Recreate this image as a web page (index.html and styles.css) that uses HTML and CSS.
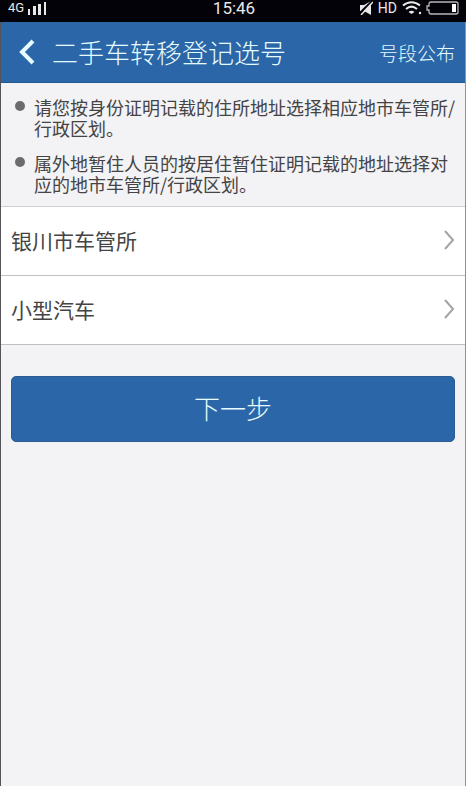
FILE: index.html
```html
<!DOCTYPE html>
<html lang="zh-CN">
<head>
    <meta charset="UTF-8">
    <meta name="viewport" content="width=device-width, initial-scale=1.0">
    <title>二手车转移登记选号</title>
    <link rel="stylesheet" href="styles.css">
</head>
<body>
    <div class="status-bar">
        <div class="status-group">
            <span class="network">4G</span>
            <svg class="signal" width="20" height="13" viewBox="0 0 20 13" fill="#e8e8e8" aria-hidden="true">
                <rect x="0" y="7" width="2" height="6"/>
                <rect x="5" y="4" width="3" height="9"/>
                <rect x="10" y="2" width="3" height="11"/>
                <rect x="16" y="0" width="2" height="13"/>
            </svg>
        </div>
        <span class="clock">15:46</span>
        <div class="status-group status-right">
            <svg width="13" height="14" viewBox="0 0 13 14" aria-hidden="true">
                <path d="M0 4h4l7-4v14L4 10H0z" fill="#e8e8e8"/>
                <path d="M-1 13L12 0" stroke="#020208" stroke-width="2"/>
                <path d="M1 14L13 1" stroke="#e8e8e8" stroke-width="1.500"/>
            </svg>
            <span class="hd">HD</span>
            <svg width="20" height="14" viewBox="0 0 20 14" fill="none" stroke="#e8e8e8" stroke-width="2" aria-hidden="true">
                <path d="M1 4.500C6 0 13 0 18 4.500"/>
                <path d="M4 8c3.500-3 7.500-3 11 0"/>
                <path d="M6.500 11c2-1.700 4-1.700 6 0L9.500 13z" fill="#e8e8e8" stroke="none"/>
                <circle cx="18" cy="12" r="1.200" fill="#e8e8e8" stroke="none"/>
            </svg>
            <svg width="34" height="14" viewBox="0 0 34 14" aria-hidden="true">
                <path d="M5 1h25a2 2 0 0 1 2 2v8a2 2 0 0 1-2 2H5a2 2 0 0 1-2-2V9H1V5h2V3a2 2 0 0 1 2-2z" fill="none" stroke="#b8b8b8" stroke-width="1.300"/>
                <rect x="26" y="3" width="4" height="8" fill="#fff"/>
            </svg>
        </div>
    </div>

    <div class="screen">
        <header class="header">
            <button class="back" type="button" aria-label="返回">
                <svg width="16" height="26" viewBox="0 0 16 26" fill="none" stroke="#e6fbff" stroke-width="4" aria-hidden="true">
                    <path d="M14 2L3 13l11 11"/>
                </svg>
            </button>
            <h1>二手车转移登记选号</h1>
            <a class="header-link" href="#">号段公布</a>
        </header>

        <main>
            <ul class="notice">
                <li>请您按身份证明记载的住所地址选择相应地市车管所/行政区划。</li>
                <li>属外地暂住人员的按居住暂住证明记载的地址选择对应的地市车管所/行政区划。</li>
            </ul>

            <div class="options">
                <button class="option" type="button">
                    <span>银川市车管所</span>
                    <svg width="12" height="20" viewBox="0 0 12 20" fill="none" stroke="#a3a3a3" stroke-width="2" aria-hidden="true">
                        <path d="M2 1l8 9-8 9"/>
                    </svg>
                </button>
                <button class="option" type="button">
                    <span>小型汽车</span>
                    <svg width="12" height="20" viewBox="0 0 12 20" fill="none" stroke="#a3a3a3" stroke-width="2" aria-hidden="true">
                        <path d="M2 1l8 9-8 9"/>
                    </svg>
                </button>
            </div>

            <button class="next" type="button">下一步</button>
        </main>
    </div>
</body>
</html>
```
FILE: styles.css
```css
* {
    box-sizing: border-box;
}

body {
    margin: 0;
    min-height: 100vh;
    display: flex;
    flex-direction: column;
    font-family: "Noto Sans CJK SC", sans-serif;
    font-weight: 400;
    color: #444;
    background: #f3f2f4;
}

button {
    font: inherit;
    color: inherit;
    border: 0;
    cursor: pointer;
}

svg {
    display: block;
    flex-shrink: 0;
}

/* status bar */
.status-bar {
    display: grid;
    grid-template-columns: 1fr auto 1fr;
    align-items: center;
    height: 22px;
    padding: 0 6px 6px 8px;
    background: #020208;
    color: #e8e8e8;
    font-family: Roboto, sans-serif;
    line-height: 16px;
}

.status-group {
    display: flex;
    align-items: center;
    gap: 4px;
}

.status-right {
    justify-content: flex-end;
}

.network {
    font-size: 13px;
}

.clock {
    font-size: 17px;
}

.hd {
    padding: 0 1px;
    font-size: 14px;
}

.screen {
    flex: 1;
    border-left: 1px solid #55535a;
    border-right: 1px solid #929296;
}

.header {
    display: flex;
    align-items: center;
    height: 61px;
    padding: 0 10px 0 18px;
    background: #2a66a8;
    border-bottom: 1px solid #23578f;
    color: #e6fbff;
}

.back {
    padding: 0;
    background: none;
}

h1 {
    flex: 1;
    margin: 0 0 0 17px;
    font-size: 26px;
    font-weight: 300;
    line-height: 36px;
}

.header-link {
    color: inherit;
    font-size: 19px;
    font-weight: 300;
    text-decoration: none;
}

.notice {
    margin: 0;
    padding: 14px 8px 11px 33px;
    list-style: none;
    font-size: 18px;
    line-height: 21px;
}

.notice li {
    position: relative;
}

.notice li + li {
    margin-top: 14px;
}

.notice li::before {
    content: '';
    position: absolute;
    top: 4px;
    left: -19px;
    width: 10px;
    height: 10px;
    border-radius: 50%;
    background: #6b6a6c;
}

.options {
    border-top: 1px solid #cfcdd0;
}

.option {
    display: flex;
    justify-content: space-between;
    align-items: center;
    width: 100%;
    height: 69px;
    padding: 0 10px 2px;
    background: #fff;
    border-bottom: 1px solid #c0bfc1;
    font-size: 21px;
}

.next {
    display: block;
    width: calc(100% - 20px);
    height: 66px;
    margin: 31px 10px;
    padding: 0 0 4px;
    border: 1px solid #2b5c92;
    border-radius: 5px;
    background: #2a66a8;
    color: #e6fbff;
    font-size: 26px;
    font-weight: 300;
}
```
